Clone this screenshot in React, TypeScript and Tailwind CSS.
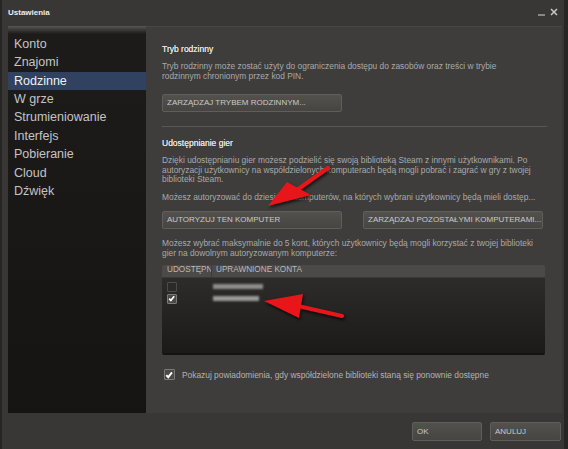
import React from "react";

const menu = ["Konto", "Znajomi", "Rodzinne", "W grze", "Strumieniowanie", "Interfejs", "Pobieranie", "Cloud", "Dźwięk"];

function Btn({ children, className = "" }: { children: React.ReactNode; className?: string }) {
  return (
    <div
      className={
        "h-[18px] flex items-center pl-[4px] rounded-[2px] border border-[#5f5e5b] bg-gradient-to-b from-[#52514e] to-[#464542] text-[8px] text-[#c9c9c9] whitespace-nowrap " +
        className
      }
    >
      {children}
    </div>
  );
}

function Check({ on, className = "" }: { on?: boolean; className?: string }) {
  return (
    <div
      className={
        "flex items-center justify-center rounded-[1px] border " +
        (on ? "border-[#7a7a78] bg-[#4a4947]" : "border-[#4c4b49] bg-[#2b2a29]") +
        " " +
        className
      }
    >
      {on && (
        <svg viewBox="0 0 10 10" className="w-[90%] h-[90%]">
          <path d="M1.6 5 L4 7.6 L8.6 1.8" fill="none" stroke="#fff" strokeWidth="2.4" />
        </svg>
      )}
    </div>
  );
}

export default function App() {
  return (
    <div className="relative w-[568px] h-[449px] bg-[#383735] border-l-2 border-r-4 border-[#272624] flex flex-col font-['Liberation_Sans',Arial,sans-serif] overflow-hidden">
      {/* title bar */}
      <div className="h-[26px] flex items-center pl-[6px] relative">
        <span className="text-[8px] font-bold text-[#ececec]">Ustawienia</span>
        <svg className="absolute right-[4px] top-[7px]" width="24" height="10" viewBox="0 0 24 10">
          <path d="M2 8 H9" stroke="#bdbdbd" strokeWidth="1.2" />
          <path d="M15 2 L21 8 M21 2 L15 8" stroke="#c8c8c8" strokeWidth="1.5" />
        </svg>
      </div>

      {/* body */}
      <div className="h-[387px] flex ml-[6px] mr-[2px]">
        <div className="w-[138px] flex flex-col bg-gradient-to-b from-[#1d1c1b] to-[#151413]">
          <div className="h-[8px] bg-gradient-to-b from-[#575653] to-[#1d1c1b]" />
          <div className="pt-[1px] flex flex-col">
            {menu.map((m) => (
              <div
                key={m}
                className={
                  "h-[18.4px] flex items-center pl-[6px] text-[12.5px] " +
                  (m === "Rodzinne" ? "bg-[#30425f] text-[#f0f0f0]" : "text-[#c4c4c4]")
                }
              >
                {m}
              </div>
            ))}
          </div>
        </div>

        <div className="flex-1 bg-[#3e3d3b] border-t border-[#484745] pl-[16px] pr-[15px] flex flex-col">
          <div className="mt-[17px] text-[8.5px] leading-[10px] text-[#e4e4e4] [text-shadow:0_0_0.4px_#e4e4e4]">Tryb rodzinny</div>
          <div className="mt-[7px] text-[8.4px] leading-[10px] text-[#a9a9a9]">
            Tryb rodzinny może zostać użyty do ograniczenia dostępu do zasobów oraz treści w trybie
            <br />
            rodzinnym chronionym przez kod PIN.
          </div>
          <Btn className="mt-[13px] w-[180px]">ZARZĄDZAJ TRYBEM RODZINNYM...</Btn>
          <div className="mt-[14px] h-px bg-[#585754] w-[385px]" />
          <div className="mt-[11px] text-[8.5px] leading-[10px] text-[#e4e4e4] [text-shadow:0_0_0.4px_#e4e4e4]">Udostępnianie gier</div>
          <div className="mt-[8px] text-[8.4px] leading-[9.5px] text-[#a9a9a9] whitespace-nowrap">
            Dzięki udostępnianiu gier możesz podzielić się swoją biblioteką Steam z innymi użytkownikami. Po
            <br />
            autoryzacji użytkownicy na współdzielonych komputerach będą mogli pobrać i zagrać w gry z twojej
            <br />
            biblioteki Steam.
          </div>
          <div className="mt-[7px] text-[8.4px] leading-[10px] text-[#a9a9a9] whitespace-nowrap">
            Możesz autoryzować do dziesięciu komputerów, na których wybrani użytkownicy będą mieli dostęp...
          </div>
          <div className="mt-[9px] flex gap-[21px]">
            <Btn className="w-[180px]">AUTORYZUJ TEN KOMPUTER</Btn>
            <Btn className="w-[180px]">ZARZĄDZAJ POZOSTAŁYMI KOMPUTERAMI...</Btn>
          </div>
          <div className="mt-[9px] text-[8.4px] leading-[10px] text-[#a9a9a9] whitespace-nowrap">
            Możesz wybrać maksymalnie do 5 kont, których użytkownicy będą mogli korzystać z twojej biblioteki
            <br />
            gier na dowolnym autoryzowanym komputerze:
          </div>

          {/* table */}
          <div className="mt-[7px] w-[383px] h-[90px] flex flex-col rounded-[2px] overflow-hidden">
            <div className="h-[13px] flex bg-[#4b4a48] border-b border-[#3a3937] text-[8.2px] text-[#b9b9b9]">
              <div className="w-[50px] shrink-0 pl-[5px] flex items-center overflow-hidden whitespace-nowrap border-r border-[#3c3b39]">
                <span className="block w-[44px] overflow-hidden">UDOSTĘPN</span>
              </div>
              <div className="pl-[4px] flex items-center">UPRAWNIONE KONTA</div>
            </div>
            <div className="flex-1 bg-gradient-to-b from-[#2d2c2b] to-[#1b1a19] border-b-2 border-[#141312] pt-[3px] flex flex-col">
              <div className="h-[12px] flex items-center pl-[5px]">
                <Check className="w-[10px] h-[10px]" />
                <div className="ml-[36px] w-[50px] h-[5px] bg-[#8d8d8b] blur-[1.2px]" />
              </div>
              <div className="h-[12px] flex items-center pl-[5px]">
                <Check on className="w-[10px] h-[10px]" />
                <div className="ml-[36px] w-[46px] h-[5px] bg-[#9a9a98] blur-[1.2px]" />
              </div>
            </div>
          </div>

          <div className="mt-[14px] flex items-center">
            <Check on className="ml-[2px] w-[11px] h-[11px]" />
            <span className="ml-[7px] text-[8.4px] text-[#b3b3b3]">
              Pokazuj powiadomienia, gdy współdzielone biblioteki staną się ponownie dostępne
            </span>
          </div>
        </div>
      </div>

      {/* footer */}
      <div className="flex-1 flex justify-end items-start pt-[9px] pr-[3px] gap-[8px]">
        <Btn className="w-[70px] h-[19px]">OK</Btn>
        <Btn className="w-[71px] h-[19px]">ANULUJ</Btn>
      </div>

      {/* annotation arrows */}
      <svg
        className="absolute left-[-2px] top-0 pointer-events-none drop-shadow-[1px_2px_1.5px_rgba(0,0,0,0.7)]"
        width="568"
        height="449"
        viewBox="0 0 568 449"
      >
        <path d="M328 168 L297 190" stroke="#e8161a" strokeWidth="4" strokeLinecap="round" />
        <polygon points="268,206 287,182 311,195" fill="#e8161a" />
        <path d="M342 316 L298 306" stroke="#e8161a" strokeWidth="4" strokeLinecap="round" />
        <polygon points="264,301 303,294 299,318" fill="#e8161a" />
      </svg>
    </div>
  );
}
